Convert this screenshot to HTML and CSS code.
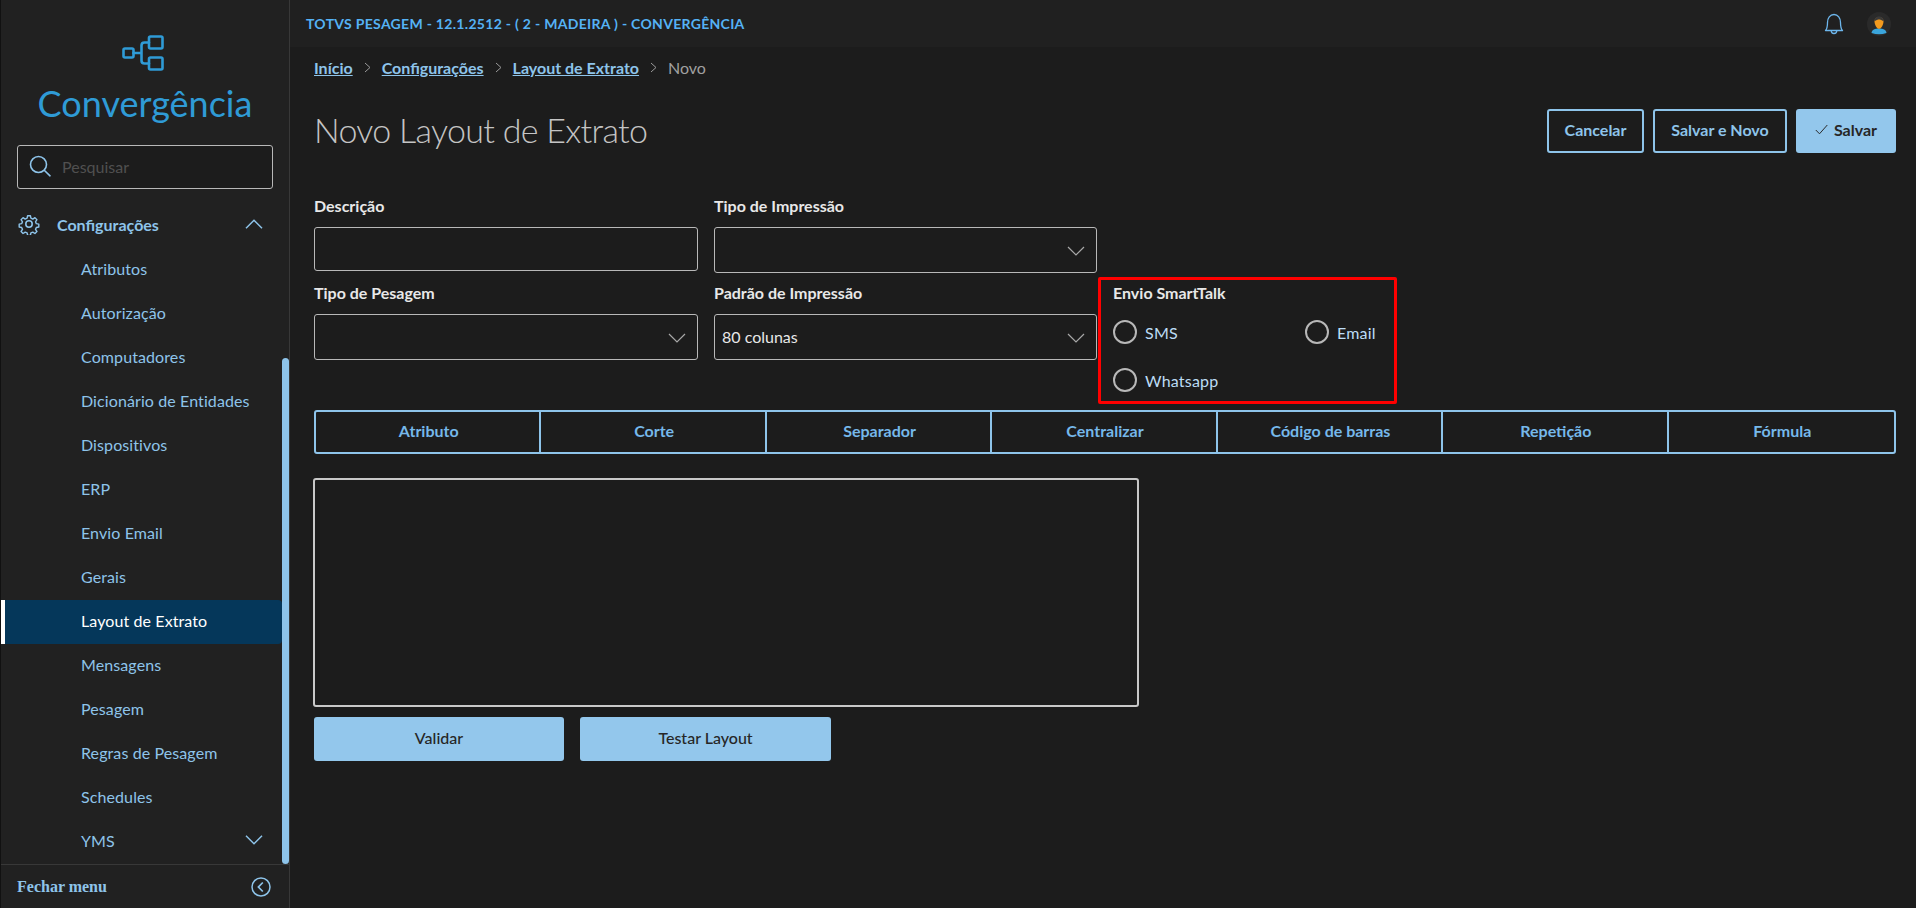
FILE: index.html
```html
<!DOCTYPE html>
<html lang="pt-BR">
<head>
<meta charset="utf-8">
<title>Novo Layout de Extrato</title>
<link rel="stylesheet" href="styles.css">
</head>
<body>
<div class="app">
  <aside class="sidebar">
    <div class="logo">
      <svg class="logo-icon" width="42" height="36" viewBox="0 0 42 36" fill="none" stroke="#2f9bd6" stroke-width="2.6" stroke-linejoin="round" stroke-linecap="round">
        <rect x="1.5" y="13.5" width="10" height="9" rx="1.5"/>
        <rect x="27" y="1.5" width="13.5" height="12" rx="1.5"/>
        <rect x="27" y="22.5" width="13.5" height="12" rx="1.5"/>
        <path d="M11.5 18H19M27 7.5H22.5Q19.500 7.500 19.500 10.500V25.500Q19.500 28.500 22.500 28.500H27"/>
      </svg>
      <div class="logo-text">Convergência</div>
    </div>
    <div class="search">
      <svg width="22" height="22" viewBox="0 0 22 22" fill="none" stroke="#8ec4ea" stroke-width="1.6" stroke-linecap="round">
        <circle cx="9.500" cy="9.500" r="8"/><path d="M15.500 15.500L21 20.800"/>
      </svg>
      <span class="search-ph">Pesquisar</span>
    </div>
    <div class="menu">
      <div class="menu-scroll">
        <div class="menu-group">
          <svg class="gear" width="22" height="22" viewBox="0 0 24 24" fill="none" stroke="#8ec4ea" stroke-width="1.700" stroke-linejoin="round">
            <circle cx="12" cy="12" r="3.500"/>
            <path d="M10.300 2h3.400l.6 3 2.300 1 2.600-1.700 2.400 2.400-1.700 2.600 1 2.300 3 .6v3.400l-3 .6-1 2.300 1.700 2.600-2.400 2.400-2.600-1.700-2.300 1-.6 3h-3.400l-.6-3-2.300-1-2.600 1.700-2.400-2.400 1.700-2.600-1-2.300-3-.6v-3.400l3-.6 1-2.300-1.700-2.600 2.400-2.400 2.600 1.700 2.300-1z" transform="translate(1.200 1.200) scale(.9)"/>
          </svg>
          <span class="menu-group-label">Configurações</span>
          <svg class="chev" width="18" height="10" viewBox="0 0 18 10" fill="none" stroke="#8ec4ea" stroke-width="1.500"><path d="M1 9.300L9 1.300L17 9.300"/></svg>
        </div>
        <a class="item">Atributos</a>
        <a class="item">Autorização</a>
        <a class="item">Computadores</a>
        <a class="item">Dicionário de Entidades</a>
        <a class="item">Dispositivos</a>
        <a class="item">ERP</a>
        <a class="item">Envio Email</a>
        <a class="item">Gerais</a>
        <a class="item active">Layout de Extrato</a>
        <a class="item">Mensagens</a>
        <a class="item">Pesagem</a>
        <a class="item">Regras de Pesagem</a>
        <a class="item">Schedules</a>
        <a class="item">YMS<svg class="chev" width="18" height="10" viewBox="0 0 18 10" fill="none" stroke="#8ec4ea" stroke-width="1.500"><path d="M1 .7L9 8.700L17 .7"/></svg></a>
      </div>
      <div class="scrollbar"></div>
    </div>
    <div class="sidebar-foot">
      <span class="foot-label">Fechar menu</span>
      <svg width="20" height="20" viewBox="0 0 20 20" fill="none" stroke="#8ec4ea" stroke-width="1.500"><circle cx="10" cy="10" r="9"/><path d="M11.800 5.500L7.400 10L11.800 14.500" stroke-width="1.700"/></svg>
    </div>
  </aside>
  <div class="content">
    <header class="topbar">
      <span class="top-title">TOTVS PESAGEM - 12.1.2512 - ( 2 - MADEIRA ) - CONVERGÊNCIA</span>
      <div class="top-icons">
        <svg width="20" height="22" viewBox="0 0 20 22" fill="none" stroke="#6db6ec" stroke-width="1.300" stroke-linejoin="round">
          <path d="M1.500 17.500C3 16 3.500 14.500 3.500 9.500C3.500 5 6 1.500 10 1.500S16.500 5 16.500 9.500C16.500 14.500 17 16 18.500 17.500Z"/>
          <path d="M7.200 17.500C7.200 19.400 8.300 20.500 10 20.500S12.800 19.400 12.800 17.500"/>
        </svg>
        <svg width="24" height="24" viewBox="0 0 24 24">
          <circle cx="12" cy="12" r="12" fill="#2a2a2a"/>
          <path d="M4.500 21C5 17.500 8 16.500 12 16.500S19 17.500 19.500 21Q12 23.500 4.500 21Z" fill="#3aa5dc"/>
          <path d="M7.500 9.500C7.500 6.500 9.500 5 12 5S16.500 6.500 16.500 9.500C16.500 13 14 16.800 12 16.800S7.500 13 7.500 9.500Z" fill="#f39a1e"/>
          <path d="M7.500 9.500C7.500 6 9.500 4.500 12 4.500S16.500 6 16.500 9.500C15 8 13 7.500 12 7.500S9 8 7.500 9.500Z" fill="#3a3a3a"/>
        </svg>
      </div>
    </header>
    <main class="page">
      <nav class="crumbs">
        <a class="crumb">Início</a><span class="sep"><svg width="7" height="11" viewBox="0 0 7 11" fill="none" stroke="#9a9a9a"><path d="M1 1L6 5.500L1 10"/></svg></span>
        <a class="crumb">Configurações</a><span class="sep"><svg width="7" height="11" viewBox="0 0 7 11" fill="none" stroke="#9a9a9a"><path d="M1 1L6 5.500L1 10"/></svg></span>
        <a class="crumb">Layout de Extrato</a><span class="sep"><svg width="7" height="11" viewBox="0 0 7 11" fill="none" stroke="#9a9a9a"><path d="M1 1L6 5.500L1 10"/></svg></span>
        <span class="crumb-cur">Novo</span>
      </nav>
      <div class="title-row">
        <h1 class="title">Novo Layout de Extrato</h1>
        <div class="actions">
          <button class="btn outline btn-cancel">Cancelar</button>
          <button class="btn outline btn-new">Salvar e Novo</button>
          <button class="btn solid btn-save"><svg width="13" height="11" viewBox="0 0 13 11" fill="none" stroke="#2b2b2b" stroke-width="1"><path d="M.8 6L4.500 9.800L12.300 1"/></svg>Salvar</button>
        </div>
      </div>
      <div class="form-row first">
        <div class="field">
          <label class="label">Descrição</label>
          <div class="input short"></div>
        </div>
        <div class="field">
          <label class="label">Tipo de Impressão</label>
          <div class="input"><svg class="select-chev" width="18" height="10" viewBox="0 0 18 10" fill="none" stroke="#a8a8a8" stroke-width="1.200"><path d="M1 1L9 9L17 1"/></svg></div>
        </div>
      </div>
      <div class="form-row second">
        <div class="field pad">
          <label class="label">Tipo de Pesagem</label>
          <div class="input"><svg class="select-chev" width="18" height="10" viewBox="0 0 18 10" fill="none" stroke="#a8a8a8" stroke-width="1.200"><path d="M1 1L9 9L17 1"/></svg></div>
        </div>
        <div class="field pad">
          <label class="label">Padrão de Impressão</label>
          <div class="input"><span class="value">80 colunas</span><svg class="select-chev" width="18" height="10" viewBox="0 0 18 10" fill="none" stroke="#a8a8a8" stroke-width="1.200"><path d="M1 1L9 9L17 1"/></svg></div>
        </div>
        <div class="smart">
          <label class="label">Envio SmartTalk</label>
          <div class="radios">
            <div class="radio"><span class="circle"></span>SMS</div>
            <div class="radio"><span class="circle"></span>Email</div>
            <div class="radio"><span class="circle"></span>Whatsapp</div>
          </div>
        </div>
      </div>
      <div class="tabs">
        <div class="tab">Atributo</div>
        <div class="tab">Corte</div>
        <div class="tab">Separador</div>
        <div class="tab">Centralizar</div>
        <div class="tab">Código de barras</div>
        <div class="tab">Repetição</div>
        <div class="tab">Fórmula</div>
      </div>
      <div class="editor"></div>
      <div class="bottom-actions">
        <button class="btn solid wide">Validar</button>
        <button class="btn solid wide">Testar Layout</button>
      </div>
    </main>
  </div>
</div>
</body>
</html>
```

FILE: styles.css
```css
* { box-sizing: border-box; }
html, body { margin: 0; height: 100%; }
body {
  background: #1c1c1c;
  font-family: Lato, "Noto Sans", sans-serif;
  font-size: 16px;
  color: #8ec4ea;
  overflow: hidden;
}
.app { display: flex; height: 908px; }

/* Sidebar */
.sidebar {
  width: 290px;
  flex: none;
  display: flex;
  flex-direction: column;
  background: #212121;
  border-left: 1px solid #111;
  border-right: 1px solid #383838;
}
.logo { display: flex; flex-direction: column; align-items: center; padding-top: 35px; }
.logo-icon { display: block; margin-left: -5px; }
.logo-text {
  margin-top: 4px;
  font-size: 36px;
  font-weight: 400;
  line-height: 56px;
  color: #2f9bd6;
  height: 50px;
}
.search {
  margin: 20px 16px 0;
  height: 44px;
  display: flex;
  align-items: center;
  gap: 11px;
  padding: 0 0 2px 11px;
  background: #1c1c1c;
  border: 1px solid #b8b8b8;
  border-radius: 3px;
}
.search-ph { color: #505050; }
.menu { flex: 1; display: flex; min-height: 0; margin-top: 15px; }
.menu-scroll { flex: 1; min-width: 0; }
.menu-group {
  height: 44px;
  display: flex;
  align-items: center;
  padding-left: 17px;
  padding-bottom: 4px;
  color: #8ec4ea;
  font-weight: 700;
}
.menu-group-label { margin-left: 17px; flex: 1; }
.chev { flex: none; margin-right: 19px; }
.item {
  height: 44px;
  display: flex;
  align-items: center;
  justify-content: space-between;
  padding: 0 0 4px 80px;
  color: #8ec4ea;
  letter-spacing: .1px;
}
.item.active {
  background: #05375a;
  color: #fff;
  border-left: 4px solid #fff;
  padding-left: 76px;
  border-radius: 0 4px 4px 0;
}
.scrollbar {
  width: 7px;
  margin: 154px 0 0;
  height: 506px;
  background: #8ec4ea;
  border-radius: 4px;
  align-self: flex-start;
}
.sidebar-foot {
  height: 44px;
  flex: none;
  display: flex;
  align-items: center;
  justify-content: space-between;
  padding: 0 18px 0 16px;
  border-top: 1px solid #383838;
}
.foot-label {
  font-family: "Liberation Serif", serif;
  font-weight: 700;
  font-size: 16px;
  color: #8ec4ea;
}

/* Top */
.content { flex: 1; min-width: 0; display: flex; flex-direction: column; }
.topbar {
  height: 47px;
  flex: none;
  display: flex;
  align-items: center;
  justify-content: space-between;
  padding: 0 25px 0 16px;
  background: #202020;
}
.top-title { color: #55b2f5; font-weight: 700; font-size: 14px; letter-spacing: .3px; }
.top-icons { display: flex; align-items: center; gap: 23px; }
.page { padding: 0 20px 0 24px; }
.crumbs { height: 44px; display: flex; align-items: center; margin-top: -2px; }
.crumb { color: #8ec4ea; font-weight: 700; text-decoration: underline; }
.crumb-cur { color: #a0a0a0; }
.sep { display: flex; margin: 0 11px; }
.title-row { display: flex; justify-content: space-between; align-items: flex-start; margin-top: 20px; height: 86px; }
.title { margin: -1px 0 0; font-size: 34px; font-weight: 300; line-height: 44px; letter-spacing: -.7px; color: #c4c4c4; }
.actions { display: flex; gap: 9px; }
.btn {
  height: 44px;
  font-family: inherit;
  font-size: 16px;
  font-weight: 700;
  border-radius: 3px;
  display: flex;
  align-items: center;
  justify-content: center;
  padding: 0 0 3px;
}
.outline { background: #1c1c1c; color: #8ec4ea; border: 2px solid #8ec4ea; }
.solid { background: #93c7ec; color: #262626; border: 0; }
.btn-cancel { width: 97px; }
.btn-new { width: 134px; }
.btn-save { width: 100px; gap: 6px; }
.wide { width: 250px; font-weight: 500; }
.wide + .wide { width: 251px; }

/* Form */
.form-row { display: grid; grid-template-columns: 384px 383px 299px; column-gap: 16px; align-items: start; }
.form-row.second { column-gap: 0; grid-template-columns: 400px 383px 300px; margin-top: 4px; }
.form-row.second .field:nth-child(1) { width: 384px; }
.field.pad { padding-top: 5px; }
.label { display: block; height: 32px; line-height: 22px; font-weight: 700; color: #e8e8e8; }
.input {
  position: relative;
  height: 46px;
  border: 1px solid #b8b8b8;
  border-radius: 3px;
  display: flex;
  align-items: center;
  padding: 0 0 2px 7px;
  color: #e8e8e8;
}
.input.short { height: 44px; }
.select-chev { position: absolute; right: 11px; top: 18px; }
.smart {
  height: 127px;
  margin-left: 1px;
  width: 299px;
  border: 3px solid #f00;
  border-radius: 2px;
  padding: 2px 12px 0;
}
.smart .label { height: 38px; }
.radios { display: grid; grid-template-columns: 192px auto; row-gap: 24px; }
.radio { display: flex; align-items: center; gap: 8px; height: 24px; color: #bcdcf5; letter-spacing: .2px; }
.circle { width: 24px; height: 24px; border: 2px solid #b8b8b8; border-radius: 50%; flex: none; }

.tabs {
  margin-top: 6px;
  height: 44px;
  display: grid;
  grid-template-columns: repeat(7, 1fr);
  border: 2px solid #8ec4ea;
  border-radius: 3px;
}
.tab {
  display: flex;
  align-items: center;
  justify-content: center;
  padding: 0 0 4px 2px;
  color: #76b8ea;
  font-weight: 700;
  border-right: 2px solid #8ec4ea;
}
.tab:last-child { border-right: 0; }
.editor {
  margin: 24px 0 0 -1px;
  width: 826px;
  height: 229px;
  border: 2px solid #c8c8c8;
  border-radius: 3px;
}
.bottom-actions { display: flex; gap: 16px; margin-top: 10px; }
```
